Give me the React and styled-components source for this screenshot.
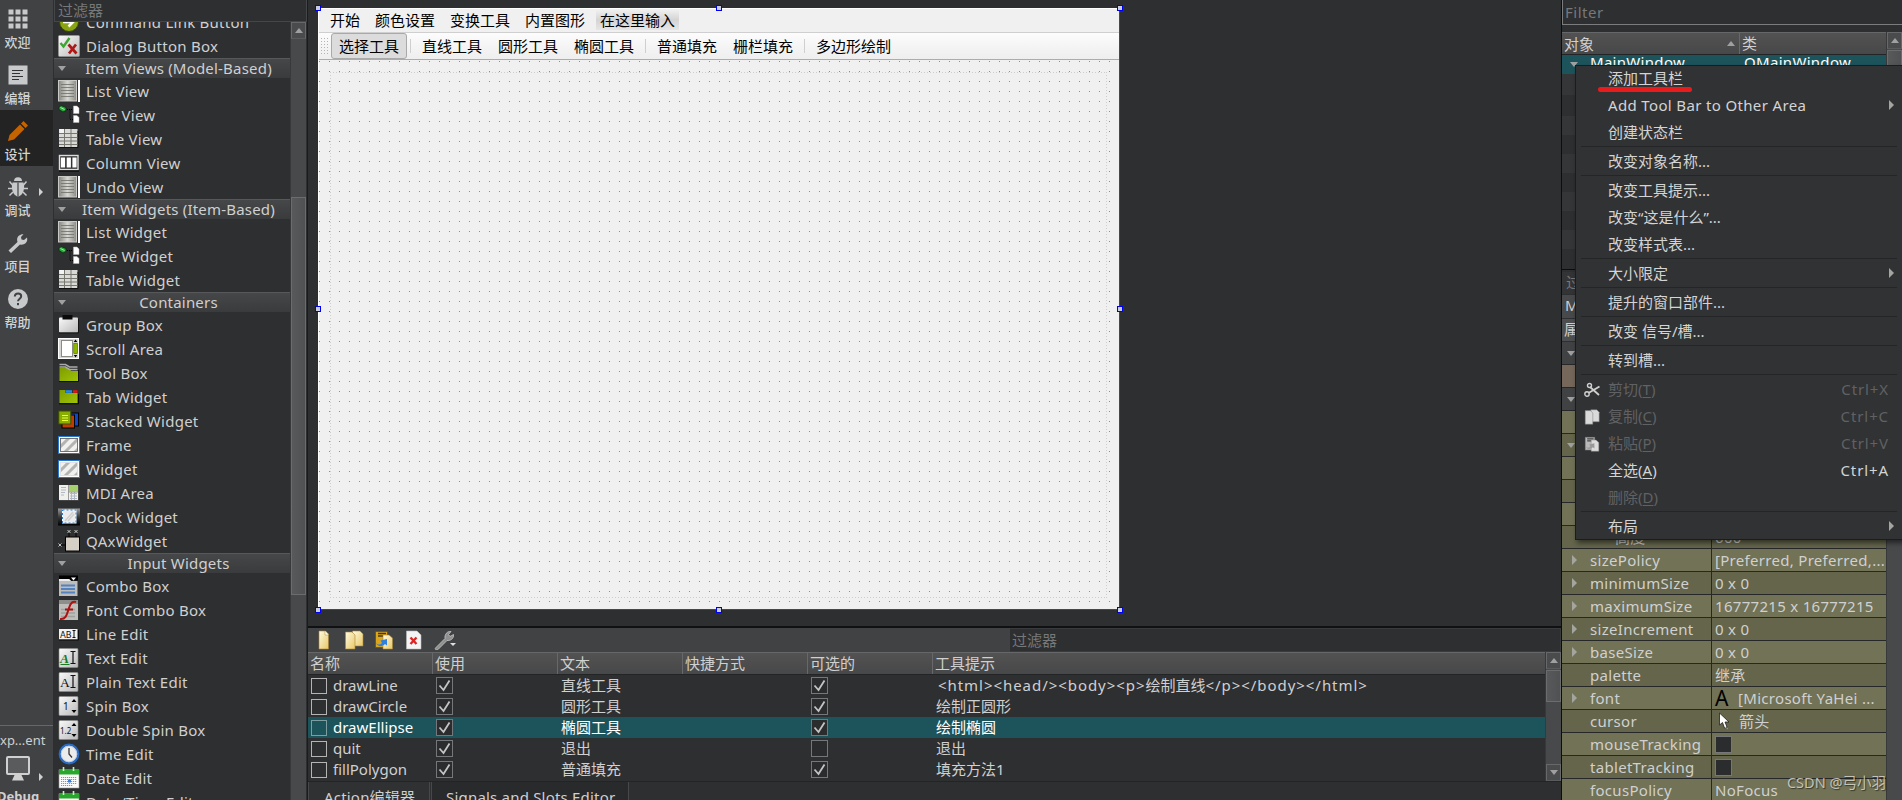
import React from 'react';
import styled, { createGlobalStyle, css } from 'styled-components';

const GlobalStyle = createGlobalStyle`
    html, body, #root {
        height: 100%;
        margin: 0;
    }

    body {
        overflow: hidden;
        background: #2e2f30;
        color: #d0d0d0;
        font-family: "Noto Sans", "Noto Sans CJK SC", sans-serif;
        font-size: 15px;
        line-height: 20px;
        white-space: nowrap;
    }

    * {
        box-sizing: border-box;
    }

    svg {
        display: block;
        flex: none;
    }
`;

const Window = styled.div`
    position: relative;
    display: grid;
    grid-template-columns: 53px 254px 1254px 1fr;
    grid-template-rows: 100%;
    height: 100vh;
    overflow: hidden;
`;

/* ---------- mode bar ---------- */

const ModeBar = styled.nav`
    display: flex;
    flex-direction: column;
    background: #404244;
    overflow: hidden;
`;

const Mode = styled.div`
    position: relative;
    flex: none;
    display: flex;
    flex-direction: column;
    align-items: center;
    width: 53px;
    height: ${({ $first }) => ($first ? 54 : 56)}px;
    padding: ${({ $first }) => ($first ? 9 : 11)}px 18px 0 0;
    background: ${({ $active }) => ($active ? '#222322' : 'transparent')};
    color: #d2d3d4;
    font-size: 13px;
    font-weight: 500;
    line-height: 16px;

    svg {
        margin-bottom: 5px;
    }
`;

const ModeArrow = styled.i`
    position: absolute;
    left: 39px;
    top: ${({ $top }) => $top}px;
    border-left: 4px solid #d0d0d0;
    border-top: 4px solid transparent;
    border-bottom: 4px solid transparent;
`;

const Kit = styled.div`
    position: relative;
    flex: none;
    display: flex;
    flex-direction: column;
    margin-top: auto;
    height: 75px;
    border-top: 1px solid #666768;
    font-size: 13px;
    line-height: 16px;
    padding-top: 6px;

    svg {
        margin: 8px 0 7px 5px;
    }

    b {
        margin-left: -3px;
    }
`;

/* ---------- widget box ---------- */

const WidgetBox = styled.aside`
    display: grid;
    grid-template-rows: 22px 1fr;
    padding-left: 1px;
    background: #2e2f30;
    min-height: 0;
    min-width: 0;
    border-right: 1px solid #0d0d0e;
    width: 255px;
`;

const FilterInput = styled.div`
    color: #777879;
    border: 1px solid #444648;
    border-top: 0;
    padding-left: 3px;
    line-height: 20px;
`;

const FilterInputDark = styled(FilterInput)`
    background: #2e2f30;
    line-height: 22px;
    padding-left: 2px;
    border: 1px solid #3a3b3d;
    border-left: 0;
`;

const WidgetBody = styled.div`
    display: grid;
    grid-template-columns: 236px 1fr;
    min-height: 0;
    overflow: hidden;
`;

const WidgetList = styled.div`
    margin-top: -12px;
`;

const Clip = styled.div`
    overflow: hidden;
    min-height: 0;
`;

const Category = styled.div`
    display: grid;
    grid-template-columns: 14px 1fr;
    align-items: center;
    height: 20px;
    margin-bottom: 1px;
    padding-left: 4px;
    text-align: center;
    line-height: 18px;
    background: linear-gradient(#464749, #3a3b3d);
    border-top: 1px solid #57585a;
    letter-spacing: 0.2px;

    span {
        margin: -2px 0 0 -5px;
    }
`;

const Caret = styled.i`
    display: block;
    width: 0;
    border-left: 4.5px solid transparent;
    border-right: 4.5px solid transparent;
    border-top: 5px solid #a0a0a0;
`;

const GroupCaret = styled(Caret)`
    && {
        margin-left: 5px;
    }
`;

const UpCaret = styled(Caret)`
    border-top: 0;
    border-bottom: 5px solid #a0a0a0;
`;

const RightCaret = styled.i`
    display: block;
    width: 0;
    border-top: 5px solid transparent;
    border-bottom: 5px solid transparent;
    border-left: 5px solid #a5a5a0;
`;

const WidgetItem = styled.div`
    display: flex;
    align-items: center;
    gap: 6px;
    height: 24px;
    padding-left: 4px;
    letter-spacing: 0.25px;
`;

const ScrollBar = styled.div`
    display: flex;
    flex-direction: column;
    width: 16px;
    background: #48494b;
    border-left: 1px solid #38393a;
    overflow: hidden;
`;

const ScrollButton = styled.div`
    flex: none;
    display: grid;
    place-items: center;
    height: 17px;
    background: #4a4b4d;
    border: 1px solid #67686a;
    border-bottom-color: #5a5b5c;
`;

const ScrollThumb = styled.div`
    flex: none;
    margin-top: ${({ $offset }) => $offset || 1}px;
    height: ${({ $size }) => $size}px;
    background: linear-gradient(90deg, #58595b, #505153);
    border: 1px solid #6b6c6e;
`;

const Spacer = styled.div`
    flex: 1;
`;

/* ---------- form editor ---------- */

const Center = styled.main`
    display: grid;
    grid-template-rows: 626px 1fr;
    border-left: 1px solid #1b1c1d;
    min-width: 0;
    min-height: 0;
`;

const FormArea = styled.div`
    padding: 8px 0 0 10px;
    background: #2e2f31;
`;

const Form = styled.div`
    position: relative;
    display: flex;
    flex-direction: column;
    width: 802px;
    height: 602px;
    background: #f0f0f0;
    color: #000;
    border-right: 1px solid #47484a;
    border-bottom: 1px solid #47484a;
    border-left: 1px solid #fff;
`;

const Handle = styled.i`
    position: absolute;
    left: ${({ $x }) => $x}px;
    top: ${({ $y }) => $y}px;
    width: 6px;
    height: 6px;
    background: #c9cde0;
    border: 1px solid #0000f0;
`;

const MenuBar = styled.div`
    display: flex;
    align-items: center;
    gap: 15px;
    height: 25px;
    padding: 0 0 2px 11px;
    border-top: 1px solid #fff;
    border-bottom: 1px solid #cfcfcf;
`;

const TypeHere = styled.span`
    margin-left: -4px;
    padding: 0 4px;
    background: linear-gradient(#efefef, #d4d4d4 50%, #e6e6e6);
`;

const ToolBar = styled.div`
    display: flex;
    align-items: center;
    height: 27px;
    padding-left: 2px;
    background: linear-gradient(#fcfcfc, #eeeeee);
    border-bottom: 1px solid #acacac;
`;

const Grip = styled.i`
    width: 8px;
    height: 17px;
    margin-right: 2px;
    background: conic-gradient(from 270deg at 1px 1px, #b4b4b4 90deg, transparent 0) 0 0 / 3px 3px;
`;

const ToolButton = styled.span`
    height: 26px;
    padding: 0 8px;
    line-height: 27px;
    ${({ $checked }) => $checked && css`
        padding: 0 7px;
        line-height: 25px;
        background: #dcdcdc;
        border: 1px solid #a9a9a9;
        border-radius: 3px;
    `}
`;

const ToolSeparator = styled.i`
    width: 1px;
    height: 14px;
    margin: 0 3px;
    background: #cfcfcf;
`;

const Canvas = styled.div`
    flex: 1;
    padding: 12px 12px 11px 11px;
    background: conic-gradient(from 270deg at 1px 1px, #8d8d8d 90deg, transparent 0) 0 1px / 10px 10px;
`;

const LayoutFrame = styled.div`
    height: 100%;
    --h: repeating-linear-gradient(90deg, #cdcdcd 0 1px, transparent 1px 3px);
    --v: repeating-linear-gradient(#cdcdcd 0 1px, transparent 1px 3px);
    background: var(--h) top / 100% 1px no-repeat, var(--h) bottom / 100% 1px no-repeat,
        var(--v) left / 1px 100% no-repeat, var(--v) right / 1px 100% no-repeat;
`;

/* ---------- action editor ---------- */

const ActionEditor = styled.section`
    display: grid;
    grid-template-rows: 24px 130px 1fr;
    background: #2e2f30;
    border-top: 2px solid #101112;
    min-height: 0;
    overflow: hidden;
`;

const ActionBar = styled.div`
    display: grid;
    grid-template-columns: 702px 1fr;
    background: #404244;
`;

const ActionIcons = styled.div`
    display: flex;
    align-items: center;
    gap: 10px;
    padding-left: 6px;
`;

const ActionTable = styled.div`
    display: grid;
    grid-template-columns: 1237px 16px;
    border-bottom: 1px solid #232425;
`;

const TableRow = styled.div`
    display: grid;
    grid-template-columns: 124px 125px 125px 125px 125px 1fr;
    align-items: center;
    height: 21px;
    background: ${({ $selected }) => ($selected ? '#1d545c' : 'transparent')};
    color: ${({ $selected }) => ($selected ? '#fff' : '#d0d0d0')};
`;

const TableHead = styled(TableRow)`
    height: 23px;
    background: linear-gradient(#525252, #474849);
    border-top: 1px solid #666769;
    border-bottom: 1px solid #232425;

    > * {
        height: 100%;
        padding-left: 2px;
        line-height: 21px;
    }

    > * + * {
        border-left: 1px solid #67686a;
    }
`;

const Cell = styled.div`
    display: flex;
    align-items: center;
    gap: ${({ $gap }) => $gap ?? 6}px;
    height: 100%;
    padding-left: ${({ $pad }) => $pad ?? 4}px;
    line-height: 19px;
    padding-bottom: ${({ $lift }) => $lift || 0}px;
`;

const Markup = styled.span`
    letter-spacing: 0.95px;
`;

const Box = styled.i`
    display: grid;
    place-items: center;
    width: ${({ $size }) => $size || 17}px;
    height: ${({ $size }) => $size || 17}px;
    border: 1px solid ${({ $line }) => $line || '#76777a'};
    background: ${({ $fill }) => $fill || '#2b2c2d'};
`;

const Tabs = styled.div`
    display: flex;
    gap: 1px;
    line-height: 31px;
    letter-spacing: 0.2px;
`;

const Tab = styled.div`
    width: ${({ $width }) => $width}px;
    padding-left: ${({ $pad }) => $pad}px;
    height: 30px;
    background: ${({ $active }) => ($active ? '#303132' : '#292a2b')};
    border-left: 1px solid #47484a;
    border-right: 1px solid #47484a;
`;

/* ---------- object inspector and properties ---------- */

const Side = styled.aside`
    display: flex;
    flex-direction: column;
    border-left: 1px solid #0d0d0e;
    overflow: hidden;
`;

const ObjectFilter = styled.div`
    flex: none;
    height: 25px;
    margin-bottom: 7px;
    padding-left: 2px;
    line-height: 24px;
    letter-spacing: 0.5px;
    color: #777879;
    border-left: 1px solid #7b7c7d;
    border-bottom: 1px solid #7b7c7d;
`;

const Scrolled = styled.div`
    flex: none;
    display: grid;
    grid-template-columns: 324px 16px;
    height: ${({ $height }) => $height}px;
    overflow: hidden;
`;

const ObjectHead = styled.div`
    display: grid;
    grid-template-columns: 178px 1fr;
    height: 23px;
    line-height: 20px;
    background: linear-gradient(#525252, #474849);
    border-top: 1px solid #666769;
    border-bottom: 1px solid #232425;

    span {
        padding-left: 2px;
    }

    span:first-child {
        display: flex;
        align-items: center;
        justify-content: space-between;
        padding-right: 4px;
        border-right: 1px solid #67686a;
    }
`;

const ObjectRow = styled.div`
    display: grid;
    grid-template-columns: 28px 154px 1fr;
    align-items: center;
    height: ${({ $tall }) => ($tall ? 21 : 19)}px;
    padding-bottom: 1px;
    background: ${({ $selected, $even }) => ($selected ? '#1d545c' : $even ? '#353638' : '#2e2f30')};
    color: #fff;

    span {
        margin-top: -4px;
        letter-spacing: 0.3px;
    }

    i {
        margin-left: 8px;
    }
`;

const PropertyTools = styled.div`
    flex: none;
    height: 73px;
    border-top: 1px solid #0d0d0e;
    padding-top: 2px;
`;

const PropertyLine = styled.div`
    height: ${({ $height }) => $height}px;
    padding-left: ${({ $pad }) => $pad}px;
    line-height: ${({ $height }) => $height - 2}px;
    background: ${({ $fill }) => $fill};
    color: ${({ $color }) => $color};
    margin-bottom: 1px;
`;

const toneColors = { group: '#404244', brown: '#75685a', light: '#717256', dark: '#64654b' };

const PropertyRow = styled.div`
    display: grid;
    grid-template-columns: 150px 1fr;
    height: 23px;
    background: ${({ $tone }) => toneColors[$tone]};
    border-bottom: 1px solid #262729;
    letter-spacing: 0.3px;
`;

const PropertyName = styled.div`
    display: grid;
    grid-template-columns: ${({ $indent }) => $indent || 28}px 1fr;
    align-items: center;
    border-right: 1px solid #262729;

    i {
        margin-left: 10px;
    }
`;

const PropertyValue = styled.div`
    display: flex;
    align-items: center;
    gap: 7px;
    padding-left: 3px;
`;

const FontSample = styled.span`
    width: 16px;
    color: #000;
    font-size: 21px;
    letter-spacing: 0;
`;

/* ---------- context menu ---------- */

const ContextMenu = styled.div`
    position: absolute;
    left: 1575px;
    top: 65px;
    width: 332px;
    height: 475px;
    padding-left: 6px;
    background: #313234;
    border: 1px solid #1b1c1d;
    box-shadow: 2px 3px 5px rgba(0, 0, 0, 0.5);
    overflow: hidden;
`;

const MenuItems = styled.div`
    margin-top: -1px;
`;

const MenuItem = styled.div`
    display: grid;
    grid-template-columns: 26px 1fr auto;
    align-items: center;
    width: 307px;
    height: 27px;
    padding-bottom: 1px;
    letter-spacing: ${({ $wide }) => ($wide ? 0.35 : 0)}px;
    color: ${({ $disabled }) => ($disabled ? '#606163' : '#d4d4d4')};

    svg {
        margin: 1px 0 0 2px;
    }

    u {
        text-underline-offset: 2px;
        text-decoration-thickness: 1px;
    }
`;

const Submenu = styled(RightCaret)`
    margin-right: -12px;
`;

const Shortcut = styled.span`
    letter-spacing: 0.9px;
`;

const MenuSeparator = styled.hr`
    width: 316px;
    height: 1px;
    margin: 0 0 1px -1px;
    border: 0;
    background: #242527;
`;

const RedStroke = styled.i`
    position: absolute;
    left: 1598px;
    top: 87px;
    width: 94px;
    height: 5px;
    border-radius: 3px;
    background: #e81c1c;
`;

const Watermark = styled.div`
    position: absolute;
    right: 16px;
    bottom: 8px;
    color: rgba(215, 215, 205, 0.85);
    font-size: 14.5px;
    text-shadow: 1px 1px 1px rgba(0, 0, 0, 0.5);
`;

/* ---------- drawings ---------- */

const WIcon = ({ children }) => (
    <svg width="22" height="22" viewBox="0 0 22 22">{children}</svg>
);

const Defs = () => (
    <svg width="0" height="0" style={{ position: 'absolute' }}>
        <defs>
            <linearGradient id="silver" x1="0" y1="0" x2="1" y2="1">
                <stop offset="0" stopColor="#fafafa" />
                <stop offset="1" stopColor="#b9b9b9" />
            </linearGradient>
            <linearGradient id="list" x1="0" x2="1" y1="0" y2="0">
                <stop offset="0" stopColor="#85857f" />
                <stop offset="0.5" stopColor="#d6d6d2" />
                <stop offset="1" stopColor="#8b8b86" />
            </linearGradient>
            <linearGradient id="lime" x1="0" y1="0" x2="1" y2="1">
                <stop offset="0" stopColor="#7f9c00" />
                <stop offset="1" stopColor="#9fc408" />
            </linearGradient>
            <linearGradient id="paper" x1="0" y1="0" x2="1" y2="1">
                <stop offset="0" stopColor="#fffbe0" />
                <stop offset="1" stopColor="#e8c766" />
            </linearGradient>
            <linearGradient id="dock" x1="0" y1="0" x2="0" y2="1">
                <stop offset="0" stopColor="#9a9a9a" />
                <stop offset="0.5" stopColor="#3a3a3a" />
                <stop offset="1" stopColor="#000" />
            </linearGradient>
            <pattern id="stripes" width="10" height="10" patternUnits="userSpaceOnUse">
                <rect width="10" height="10" fill="#f1f1ef" />
                <path d="M-2 7L7-2M3 12L12 3" stroke="#b4b4b2" strokeWidth="3" />
            </pattern>
        </defs>
    </svg>
);

const Card = () => <rect x="1" y="1.5" width="19" height="19" rx="1" fill="url(#silver)" stroke="#8c8c8c" strokeWidth=".6" />;

const listIcon = (
    <WIcon>
        <rect x="0.5" y="0.5" width="18" height="20.5" fill="url(#list)" stroke="#c8c8c4" />
        <path d="M3 4.5h13M3 7.5h13M3 10.5h13M3 13.5h13M3 16.5h13" stroke="#777772" strokeWidth=".9" />
        <path d="M19.500 1v20" stroke="#333" />
        <rect x="20" y="0" width="2" height="22" fill="#fff" />
    </WIcon>
);

const treeIcon = (
    <WIcon>
        <path d="M1 3.500l2-2 5 2v3l-3 1.500-4-2.500z" fill="#2aa83a" stroke="#06300c" strokeWidth=".8" />
        <path d="M2.500 3.500l4 2" stroke="#9df5a8" />
        <path d="M9 5.500h6M12 5.500v10M12 15.500h3" stroke="#000" strokeDasharray="1 1" />
        <path d="M15.500 2h3.500l2 2v5.500h-5.500zM15.500 11.500h3.500l2 2v5h-5.500z" fill="#fff" stroke="#bbb" strokeWidth=".5" />
    </WIcon>
);

const tableIcon = (
    <WIcon>
        <rect x="1" y="1" width="18.500" height="18" fill="#d9d9d6" />
        <path d="M1 19.500h19V3" stroke="#111" fill="none" />
        <path d="M1 5.500h18.500M1 9.500h18.500M1 13h18.500M1 16.500h18.500M6.500 1v18M13 1v18" stroke="#77776f" />
        <rect x="1.500" y="1" width="4.500" height="4" fill="#f4f4f4" />
    </WIcon>
);

const stripeIcon = (inner) => (
    <WIcon>
        <rect x="0.500" y="2.500" width="21" height="17" fill="#fff" stroke="#2878d0" />
        <rect x="2.500" y="4.500" width="17" height="13" fill="url(#stripes)" stroke={inner ? '#555' : '#ddd'} strokeWidth=".8" />
    </WIcon>
);

const spinIcon = (label) => (
    <WIcon>
        <Card />
        <text x={label.length > 1 ? 2 : 5} y="14.500" fontSize={label.length > 1 ? 8 : 10} letterSpacing="0" fontFamily="Noto Sans" fill="#111">{label}</text>
        <path d="M13.500 7l2.500-3 2.500 3zM13.500 15l2.500 3 2.500-3z" fill="#000" />
    </WIcon>
);

const editIcon = (color, underline) => (
    <WIcon>
        <Card />
        <text x="2" y="15.500" fontSize="13.500" fontFamily="Liberation Serif" fontStyle={underline ? 'italic' : 'normal'} fontWeight={underline ? 700 : 400} fill={color}>A</text>
        {underline && <path d="M2.500 17.500h9" stroke={color} />}
        <path d="M12.500 4.500h5M12.500 16.500h5M15 5v11" stroke="#111" strokeWidth="1.200" />
    </WIcon>
);

const calendarIcon = (
    <WIcon>
        <rect x="1" y="3" width="20" height="18" fill="#fbfbfb" stroke="#999" strokeWidth=".6" />
        <rect x="1" y="2" width="20" height="5.500" fill="#27a82c" />
        <path d="M5.500 0v4M15.500 0v4" stroke="#bdf5b8" strokeWidth="1.600" />
        <path d="M3 10.500h16M3 12.500h16M3 14.500h16M3 16.500h16M3 18.500h12" stroke="#8f9296" strokeDasharray="1.200 .8" strokeWidth="1.200" />
        <rect x="10" y="12.500" width="3" height="3" fill="#3f83d8" />
    </WIcon>
);

const icons = {
    command: (
        <WIcon>
            <circle cx="11" cy="11" r="9.500" fill="#88a412" stroke="#394600" />
            <path d="M5 11h9M10.500 6.500L15 11l-4.500 4.500" fill="none" stroke="#fff" strokeWidth="2.600" />
        </WIcon>
    ),
    dialog: (
        <WIcon>
            <rect x="0.500" y="0.500" width="21" height="21" rx="1" fill="url(#silver)" stroke="#999" strokeWidth=".6" />
            <path d="M2.500 8l3 3.500L11.500 3" fill="none" stroke="#3fa535" strokeWidth="2.400" />
            <path d="M10.500 9.500l8 9M18 9.500l-7 9" stroke="#b01818" strokeWidth="2.700" />
        </WIcon>
    ),
    list: listIcon,
    tree: treeIcon,
    table: tableIcon,
    column: (
        <WIcon>
            <rect x="1.500" y="3.500" width="18.500" height="14" fill="#333" stroke="#ddd" strokeWidth="1.400" />
            <path d="M5 5.500v10M10.800 5.500v10M16.500 5.500v10" stroke="#fff" strokeWidth="4.200" />
            <path d="M1 19h20" stroke="#000" />
        </WIcon>
    ),
    group: (
        <WIcon>
            <rect x="1" y="3.500" width="19" height="15" rx="1" fill="url(#silver)" />
            <rect x="4.500" y="1" width="10" height="4.500" fill="#0a0a0a" />
            <path d="M1 19h19.500V5" stroke="#151515" fill="none" />
        </WIcon>
    ),
    scroll: (
        <WIcon>
            <rect x="0.500" y="0.500" width="20" height="20" fill="#d6d6d0" stroke="#fff" />
            <rect x="3.500" y="2.500" width="11" height="16" fill="#fff" stroke="#8b8b86" />
            <rect x="15.800" y="5.500" width="3.500" height="10" fill="#8db600" stroke="#455a00" strokeWidth=".6" />
            <path d="M15.800 4l1.700-2.500L19.300 4zM15.800 17l1.700 2.500 1.800-2.500z" fill="#000" />
        </WIcon>
    ),
    toolbox: (
        <WIcon>
            <path d="M1.500 6h8l4 3h6.500v10H1.500z" fill="url(#lime)" />
            <path d="M1.500 2.500h6l4 2.500h8M1.500 5h6l4 2.500h8" stroke="#aaa" strokeWidth="1.500" fill="none" />
            <path d="M1 19.500h19.500V8" stroke="#111" fill="none" />
        </WIcon>
    ),
    tab: (
        <WIcon>
            <path d="M1.500 4h6v3h12v10h-18z" fill="url(#lime)" />
            <path d="M8 5.500h6" stroke="#1d8bf0" strokeWidth="2.600" />
            <path d="M15 5.500h4.500" stroke="#ee1111" strokeWidth="2.600" />
            <path d="M1 17.800h19.500V8" stroke="#0a0a0a" fill="none" />
        </WIcon>
    ),
    stacked: (
        <WIcon>
            <rect x="9" y="3" width="11.500" height="13" fill="#1246c8" stroke="#000" />
            <rect x="4" y="5" width="12.500" height="13" fill="#c23a04" stroke="#000" />
            <rect x="0.800" y="1" width="12" height="13" fill="#8aae00" stroke="#3c4d00" />
            <path d="M4 5.500h6M4 8h6M4 10.500h6" stroke="#e8ff3a" strokeWidth="1.200" />
        </WIcon>
    ),
    frame: stripeIcon(true),
    widget: stripeIcon(false),
    mdi: (
        <WIcon>
            <rect x="1" y="3" width="19" height="15" fill="#efefec" />
            <rect x="11" y="3" width="9" height="6.500" fill="#a6d06e" />
            <path d="M3 5.500h5M3 8h5M3 10.500h4M3 13h3M12 11.500h7M12 14h7M12 16.500h7M13.500 10v8M16.500 10v8" stroke="#b0b8c4" />
            <path d="M10.500 3v15M10.500 10h9.500" stroke="#777" strokeWidth=".7" />
            <path d="M1 18.500h19.500V4" stroke="#444" fill="none" />
        </WIcon>
    ),
    dock: (
        <WIcon>
            <rect y="2.500" width="22" height="17" fill="url(#dock)" />
            <rect x="4.500" y="4" width="13.500" height="13" fill="#ececec" stroke="#fff" />
            <path d="M7 15l8-9M10 15l6-7" stroke="#cfcfcf" strokeWidth="1.500" />
            <rect x="4.500" y="4" width="13.500" height="13" fill="none" stroke="#2878d0" strokeDasharray="2 2" />
        </WIcon>
    ),
    qax: (
        <WIcon>
            <rect x="7.500" y="7" width="14" height="14" fill="#d5cfc6" stroke="#000" />
            <path d="M11 2v5M18 2v5M2 15h5" stroke="#000" />
            <path d="M9.500 0l3 3M12.500 0l-3 3M16.500 0l3 3M19.500 0l-3 3M0.500 13.500l3 3M3.500 13.500l-3 3" stroke="#e8e8e8" strokeWidth=".8" />
        </WIcon>
    ),
    combo: (
        <WIcon>
            <rect x="1" y="0.500" width="19" height="5" fill="#000" />
            <path d="M1 4h10l2 2h6.500v15H1z" fill="#bdbdbb" />
            <path d="M1 4h10l2 2H1z" fill="#eee" />
            <path d="M13 2.500h5l-2.500 3z" fill="#fff" />
            <path d="M3 10.500h14M3 14h14M3 17.500h14" stroke="#5583bf" strokeWidth="2" />
        </WIcon>
    ),
    font: (
        <WIcon>
            <rect x="1" y="1" width="19" height="20" fill="#8e8e8c" />
            <rect x="1" y="5" width="19" height="16" fill="#bdbdba" />
            <path d="M3 10.500h14M3 14h14M3 17.500h14" stroke="#a0a09e" strokeWidth="1.500" />
            <path d="M2 20c6 1 7-5 9-11s4-7 7-6M7 10.500h8" fill="none" stroke="#b01010" strokeWidth="2" />
        </WIcon>
    ),
    line: (
        <WIcon>
            <rect x="1" y="6" width="18.500" height="10.500" fill="#f2f2f2" />
            <path d="M1 17h19.500V7" stroke="#0a0a0a" fill="none" />
            <text x="2" y="14.500" fontSize="8.500" letterSpacing="0" fontFamily="DejaVu Sans" fill="#111">AB</text>
            <path d="M14.500 7.500h3M14.500 14.500h3M16 8v6" stroke="#111" />
        </WIcon>
    ),
    text: editIcon('#1d7a25', true),
    plain: editIcon('#111', false),
    spin: spinIcon('1'),
    double: spinIcon('1.2'),
    time: (
        <WIcon>
            <circle cx="11" cy="11" r="9.300" fill="#ececec" stroke="#2a6cc4" strokeWidth="2.200" />
            <circle cx="11" cy="11" r="7.800" fill="none" stroke="#b9c8dd" strokeWidth=".8" />
            <path d="M11 5v6l3 3.500" stroke="#333" strokeWidth="1.300" fill="none" />
        </WIcon>
    ),
    date: calendarIcon,
};

const GridIcon = () => (
    <svg width="20" height="20" viewBox="0 0 20 20">
        {[0, 7, 14].map((x) => [0, 7, 14].map((y) => <rect key={`${x}-${y}`} x={x + 0.5} y={y + 0.5} width="5" height="5" fill="#c8c9ca" />))}
    </svg>
);

const EditModeIcon = () => (
    <svg width="20" height="20" viewBox="0 0 20 20">
        <rect x="0.500" y="0.500" width="19" height="19" fill="#c8c9ca" />
        <path d="M4 5.500h11M4 8.500h8M4 11.500h11M4 14.500h7" stroke="#333" strokeWidth="1.200" />
    </svg>
);

const DesignIcon = () => (
    <svg width="20" height="20" viewBox="0 0 20 20">
        <path d="M0 20l1.500-6L12 3.500l4.500 4.500L6 18.500zM13 2.500L15.500 0 20 4.500 17.500 7z" fill="#c46400" />
    </svg>
);

const BugIcon = () => (
    <svg width="20" height="20" viewBox="0 0 20 20">
        <path d="M6 4a4 3.800 0 0 1 8 0z" fill="#c8c9ca" />
        <path d="M4.500 5.500h11c1.500 5 .5 12-5.500 14.500C4 17.500 3 10.500 4.500 5.500z" fill="#c8c9ca" />
        <path d="M10 5.500V20" stroke="#404244" strokeWidth="1.200" />
        <path d="M4.500 8L1.500 4.500M15.500 8l3-3.500M4 11.500H0M16 11.500h4M5 15l-3.500 3.500M15 15l3.500 3.500" stroke="#c8c9ca" strokeWidth="1.500" />
    </svg>
);

const WrenchIcon = () => (
    <svg width="20" height="20" viewBox="0 0 20 20">
        <path d="M0.500 17.500L9.500 9C8 4.500 11 1 15.500 1.200L13 4l.5 2.500 2.500.5L19 4.500c1.200 4.500-2.500 8-7 7L3 20z" fill="#c8c9ca" />
    </svg>
);

const HelpIcon = () => (
    <svg width="20" height="20" viewBox="0 0 20 20">
        <circle cx="10" cy="10" r="10" fill="#c8c9ca" />
        <path d="M6.800 7.500C7 3.500 13.200 3.700 13.200 7.300c0 2.400-3.200 2.400-3.200 5" stroke="#404244" strokeWidth="2" fill="none" />
        <rect x="9" y="14" width="2" height="2.200" fill="#404244" />
    </svg>
);

const MonitorIcon = () => (
    <svg width="26" height="25" viewBox="0 0 26 25">
        <rect x="2" y="1" width="22" height="17" rx="1" fill="#5a5b5d" stroke="#d0d0d0" strokeWidth="2" />
        <path d="M10 18h6l3 6.500H7z" fill="#d0d0d0" />
    </svg>
);

const Check = () => (
    <svg width="15" height="15" viewBox="0 0 15 15">
        <path d="M2.500 7.500l4 4.500 6-9.500" fill="none" stroke="#c4c4c4" strokeWidth="1.800" />
    </svg>
);

const NewIcon = () => (
    <svg width="20" height="20" viewBox="0 0 20 20">
        <path d="M5 1h6.500l3 3v15H5z" fill="url(#paper)" stroke="#a8853a" strokeWidth=".6" />
        <path d="M11 1v4h3.500" fill="#fff" stroke="#a8853a" strokeWidth=".5" />
    </svg>
);

const CopyIcon = ({ fill = 'url(#paper)', line = '#a8853a', size = 20 }) => (
    <svg width={size} height={size} viewBox="0 0 20 20">
        <path d="M8.500 1H16l3 3v12H8.500z" fill={fill} stroke={line} strokeWidth=".6" />
        <path d="M1.500 2H8l3 3v14H1.500z" fill={fill} stroke={line} strokeWidth=".6" />
    </svg>
);

const PasteIcon = ({ gray, size = 20 }) => (
    <svg width={size} height={size} viewBox="0 0 20 20">
        <rect x="1.500" y="1.500" width="12" height="16" fill={gray ? '#b8b8b8' : '#dba51c'} stroke={gray ? '#777' : '#6b4c00'} strokeWidth=".7" />
        <path d="M4 3.500h8M4 6h6" stroke={gray ? '#444' : '#47381a'} strokeWidth="1.500" />
        <path d="M9 5h6l3.500 3v11H9z" fill={gray ? '#dcdcdc' : 'url(#paper)'} stroke={gray ? '#888' : '#a8853a'} strokeWidth=".6" />
        <path d="M2 13c2 2 4 2 6 0l-1.500-2.500L13 9v6.500l-2-1.500c-3 3-7 3-9-1z" fill={gray ? '#999' : '#2f7fe0'} />
    </svg>
);

const DeleteIcon = () => (
    <svg width="20" height="20" viewBox="0 0 20 20">
        <path d="M2.500 1h10.500l4 4v14H2.500z" fill="#f4f4f4" stroke="#bbb" strokeWidth=".6" />
        <path d="M6.500 7.500l6 6.500M12.500 7.500l-6 6.500" stroke="#dc2626" strokeWidth="2.400" />
    </svg>
);

const ConfigIcon = () => (
    <svg width="24" height="20" viewBox="0 0 24 20">
        <path d="M1.500 18L11 8.500C10.500 4.500 13 1 17 1.500l-2.500 3L16 6.500l3.500-2c.5 4-3 6.500-6.500 6L4 19.500C2.500 20.500.5 19.500 1.500 18z" fill="#8f8f8f" stroke="#c8c8c8" strokeWidth=".8" />
        <path d="M16 13h6l-3 3z" fill="#e0e0e0" />
    </svg>
);

const ScissorsIcon = () => (
    <svg width="16" height="16" viewBox="0 0 16 16">
        <path d="M15.500 4.500L4.500 11M15 13L6 5" stroke="#cfcfcf" strokeWidth="1.800" />
        <circle cx="5.500" cy="3.500" r="2" fill="none" stroke="#cfcfcf" strokeWidth="1.400" />
        <circle cx="3" cy="12" r="2.200" fill="none" stroke="#cfcfcf" strokeWidth="1.400" />
    </svg>
);

const CursorIcon = () => (
    <svg width="17" height="18" viewBox="0 0 17 18">
        <path d="M4.500 1v12l3-2.500 2 5.500 2.500-1-2-5h4z" fill="#fff" stroke="#222" strokeWidth=".8" />
        <path d="M10 15l3 2" stroke="#ddd" strokeDasharray="1 1" />
    </svg>
);

/* ---------- data ---------- */

const modes = [
    { label: '欢迎', icon: <GridIcon /> },
    { label: '编辑', icon: <EditModeIcon /> },
    { label: '设计', icon: <DesignIcon />, active: true },
    { label: '调试', icon: <BugIcon />, arrow: true },
    { label: '项目', icon: <WrenchIcon /> },
    { label: '帮助', icon: <HelpIcon /> },
];

const widgetGroups = [
    { items: [['command', 'Command Link Button'], ['dialog', 'Dialog Button Box']] },
    {
        title: 'Item Views (Model-Based)',
        items: [['list', 'List View'], ['tree', 'Tree View'], ['table', 'Table View'], ['column', 'Column View'], ['list', 'Undo View']],
    },
    { title: 'Item Widgets (Item-Based)', items: [['list', 'List Widget'], ['tree', 'Tree Widget'], ['table', 'Table Widget']] },
    {
        title: 'Containers',
        items: [
            ['group', 'Group Box'], ['scroll', 'Scroll Area'], ['toolbox', 'Tool Box'], ['tab', 'Tab Widget'], ['stacked', 'Stacked Widget'],
            ['frame', 'Frame'], ['widget', 'Widget'], ['mdi', 'MDI Area'], ['dock', 'Dock Widget'], ['qax', 'QAxWidget'],
        ],
    },
    {
        title: 'Input Widgets',
        items: [
            ['combo', 'Combo Box'], ['font', 'Font Combo Box'], ['line', 'Line Edit'], ['text', 'Text Edit'], ['plain', 'Plain Text Edit'],
            ['spin', 'Spin Box'], ['double', 'Double Spin Box'], ['time', 'Time Edit'], ['date', 'Date Edit'], ['date', 'Date/Time Edit'],
        ],
    },
];

const menus = ['开始', '颜色设置', '变换工具', '内置图形'];
const tools = ['选择工具', '|', '直线工具', '圆形工具', '椭圆工具', '|', '普通填充', '栅栏填充', '|', '多边形绘制'];

const columns = ['名称', '使用', '文本', '快捷方式', '可选的', '工具提示'];
const actions = [
    {
        name: 'drawLine',
        text: '直线工具',
        checkable: true,
        tip: <><Markup>{'<html><head/><body><p>'}</Markup>绘制直线<Markup>{'</p></body></html>'}</Markup></>,
        pad: 6,
    },
    { name: 'drawCircle', text: '圆形工具', checkable: true, tip: '绘制正圆形' },
    { name: 'drawEllipse', text: '椭圆工具', checkable: true, tip: '绘制椭圆', selected: true },
    { name: 'quit', text: '退出', checkable: false, tip: '退出' },
    { name: 'fillPolygon', text: '普通填充', checkable: true, tip: '填充方法1' },
];

const properties = [
    { tone: 'group', open: true },
    { tone: 'brown' },
    { tone: 'group', open: true },
    { tone: 'light' },
    { tone: 'dark', open: true },
    { tone: 'light' },
    { tone: 'dark' },
    { tone: 'light' },
    { tone: 'dark', name: '高度', value: '600', indent: 53 },
    { tone: 'light', name: 'sizePolicy', value: '[Preferred, Preferred,...', closed: true },
    { tone: 'dark', name: 'minimumSize', value: '0 x 0', closed: true },
    { tone: 'light', name: 'maximumSize', value: '16777215 x 16777215', closed: true },
    { tone: 'dark', name: 'sizeIncrement', value: '0 x 0', closed: true },
    { tone: 'light', name: 'baseSize', value: '0 x 0', closed: true },
    { tone: 'dark', name: 'palette', value: '继承' },
    { tone: 'light', name: 'font', value: '[Microsoft YaHei ...', kind: 'font', closed: true },
    { tone: 'dark', name: 'cursor', value: '箭头', kind: 'cursor' },
    { tone: 'light', name: 'mouseTracking', kind: 'check' },
    { tone: 'dark', name: 'tabletTracking', kind: 'check' },
    { tone: 'light', name: 'focusPolicy', value: 'NoFocus' },
];

const menuItems = [
    { label: '添加工具栏' },
    { label: 'Add Tool Bar to Other Area', sub: true, wide: true },
    { label: '创建状态栏' },
    null,
    { label: '改变对象名称...' },
    null,
    { label: '改变工具提示...' },
    { label: '改变“这是什么”...' },
    { label: '改变样式表...' },
    null,
    { label: '大小限定', sub: true },
    null,
    { label: '提升的窗口部件...' },
    null,
    { label: '改变 信号/槽...' },
    null,
    { label: '转到槽...' },
    null,
    { label: '剪切', mnemonic: 'T', shortcut: 'Ctrl+X', disabled: true, icon: <ScissorsIcon /> },
    { label: '复制', mnemonic: 'C', shortcut: 'Ctrl+C', disabled: true, icon: <CopyIcon fill="#dadada" line="#777" size={16} /> },
    { label: '粘贴', mnemonic: 'P', shortcut: 'Ctrl+V', disabled: true, icon: <PasteIcon gray size={16} /> },
    { label: '全选', mnemonic: 'A', shortcut: 'Ctrl+A' },
    { label: '删除', mnemonic: 'D', disabled: true },
    null,
    { label: '布局', sub: true },
];

const handles = [[-4, -3], [397, -3], [798, -3], [-4, 298], [798, 298], [-4, 599], [397, 599], [798, 599]];

const App = () => (
    <Window>
        <GlobalStyle />
        <Defs />
        <ModeBar>
            {modes.map((mode, index) => (
                <Mode key={mode.label} $first={index === 0} $active={mode.active}>
                    {mode.icon}
                    {mode.label}
                    {mode.arrow && <ModeArrow $top={22} />}
                </Mode>
            ))}
            <Kit>
                xp...ent
                <MonitorIcon />
                <b>Debug</b>
                <ModeArrow $top={47} />
            </Kit>
        </ModeBar>

        <WidgetBox>
            <FilterInput>过滤器</FilterInput>
            <WidgetBody>
                <Clip>
                    <WidgetList>
                        {widgetGroups.map((group, index) => (
                            <React.Fragment key={index}>
                                {group.title && (
                                    <Category>
                                        <Caret />
                                        <span>{group.title}</span>
                                    </Category>
                                )}
                                {group.items.map(([icon, label]) => (
                                    <WidgetItem key={label}>
                                        {icons[icon]}
                                        {label}
                                    </WidgetItem>
                                ))}
                            </React.Fragment>
                        ))}
                    </WidgetList>
                </Clip>
                <ScrollBar>
                    <ScrollButton><UpCaret /></ScrollButton>
                    <ScrollThumb $offset={158} $size={398} />
                </ScrollBar>
            </WidgetBody>
        </WidgetBox>

        <Center>
            <FormArea>
                <Form>
                    <MenuBar>
                        {menus.map((menu) => <span key={menu}>{menu}</span>)}
                        <TypeHere>在这里输入</TypeHere>
                    </MenuBar>
                    <ToolBar>
                        <Grip />
                        {tools.map((tool, index) => (
                            tool === '|'
                                ? <ToolSeparator key={index} />
                                : <ToolButton key={index} $checked={index === 0}>{tool}</ToolButton>
                        ))}
                    </ToolBar>
                    <Canvas><LayoutFrame /></Canvas>
                    {handles.map(([x, y]) => <Handle key={`${x},${y}`} $x={x} $y={y} />)}
                </Form>
            </FormArea>
            <ActionEditor>
                <ActionBar>
                    <ActionIcons>
                        <NewIcon />
                        <CopyIcon />
                        <PasteIcon />
                        <DeleteIcon />
                        <ConfigIcon />
                    </ActionIcons>
                    <FilterInputDark>过滤器</FilterInputDark>
                </ActionBar>
                <ActionTable>
                    <div>
                        <TableHead>
                            {columns.map((column) => <span key={column}>{column}</span>)}
                        </TableHead>
                        {actions.map((action) => (
                            <TableRow key={action.name} $selected={action.selected}>
                                <Cell $pad={3}>
                                    <Box $size={16} $line={action.selected ? '#7d9da1' : '#b4b4b4'} $fill="transparent" />
                                    {action.name}
                                </Cell>
                                <Cell><Box><Check /></Box></Cell>
                                <Cell $lift={1}>{action.text}</Cell>
                                <Cell />
                                <Cell><Box>{action.checkable && <Check />}</Box></Cell>
                                <Cell $pad={action.pad} $gap={0} $lift={1}>{action.tip}</Cell>
                            </TableRow>
                        ))}
                    </div>
                    <ScrollBar>
                        <ScrollButton><UpCaret /></ScrollButton>
                        <ScrollThumb $size={32} />
                        <Spacer />
                        <ScrollButton><Caret /></ScrollButton>
                    </ScrollBar>
                </ActionTable>
                <Tabs>
                    <Tab $width={122} $pad={15} $active>Action编辑器</Tab>
                    <Tab $width={198} $pad={14}>Signals and Slots Editor</Tab>
                </Tabs>
            </ActionEditor>
        </Center>

        <Side>
            <ObjectFilter>Filter</ObjectFilter>
            <Scrolled $height={237}>
                <div>
                    <ObjectHead>
                        <span>对象<UpCaret /></span>
                        <span>类</span>
                    </ObjectHead>
                    <ObjectRow $selected>
                        <Caret />
                        <span>MainWindow</span>
                        <span>QMainWindow</span>
                    </ObjectRow>
                    {Array.from({ length: 10 }, (_, index) => (
                        <ObjectRow key={index} $even={index % 2 === 0} $tall={index < 2} />
                    ))}
                </div>
                <ScrollBar>
                    <ScrollButton><UpCaret /></ScrollButton>
                    <ScrollThumb $size={80} />
                </ScrollBar>
            </Scrolled>
            <PropertyTools>
                <PropertyLine $height={22} $pad={4} $fill="#333436" $color="#777879">过滤器</PropertyLine>
                <PropertyLine $height={23} $pad={3} $fill="#48494a">MainWindow</PropertyLine>
                <PropertyLine $height={22} $pad={2} $fill="#4d4e4f">属性</PropertyLine>
            </PropertyTools>
            <Scrolled $height={460}>
                <div>
                    {properties.map((property, index) => (
                        <PropertyRow key={index} $tone={property.tone}>
                            <PropertyName $indent={property.indent}>
                                {property.closed ? <RightCaret /> : property.open ? <GroupCaret /> : <span />}
                                {property.name}
                            </PropertyName>
                            <PropertyValue>
                                {property.kind === 'font' && <FontSample>A</FontSample>}
                                {property.kind === 'cursor' && <CursorIcon />}
                                {property.kind === 'check' && <Box />}
                                {property.value}
                            </PropertyValue>
                        </PropertyRow>
                    ))}
                </div>
                <ScrollBar />
            </Scrolled>
        </Side>

        <ContextMenu>
            <MenuItems>
                {menuItems.map((item, index) => (
                    item ? (
                        <MenuItem key={index} $disabled={item.disabled} $wide={item.wide}>
                            <span>{item.icon}</span>
                            <span>{item.label}{item.mnemonic && <>(<u>{item.mnemonic}</u>)</>}</span>
                            {item.sub ? <Submenu /> : <Shortcut>{item.shortcut}</Shortcut>}
                        </MenuItem>
                    ) : <MenuSeparator key={index} />
                ))}
            </MenuItems>
        </ContextMenu>
        <RedStroke />
        <Watermark>CSDN @弓小羽</Watermark>
    </Window>
);

export default App;
